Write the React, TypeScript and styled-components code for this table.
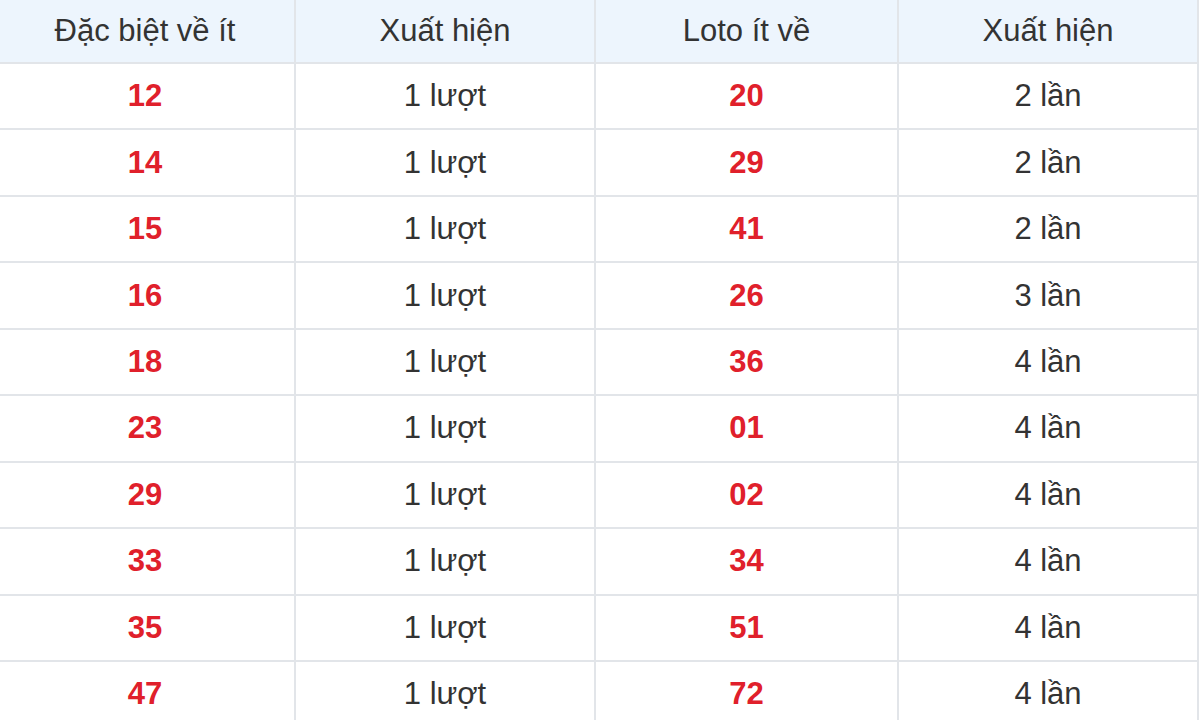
import React from "react";
import styled, { createGlobalStyle } from "styled-components";

const GlobalStyle = createGlobalStyle`
  html, body { margin: 0; padding: 0; background: #ffffff; }
  body { font-family: "Liberation Sans", Arial, sans-serif; overflow: hidden; }
`;

const Wrap = styled.div`
  width: 1203px;
  margin-left: -6px;
`;

const Table = styled.table`
  width: 100%;
  border-collapse: collapse;
  table-layout: fixed;
  font-family: "Liberation Sans", Arial, sans-serif;
  font-size: 31px;
  color: #333333;
`;

const HeadCell = styled.th`
  height: 62px;
  padding: 0;
  background: #edf5fd;
  font-weight: 400;
  text-align: center;
  vertical-align: middle;
  border: 2px solid #e2e5e9;
  border-top: none;
  color: #333333;
`;

const Row = styled.tr`
  height: 66.44px;
`;

const Cell = styled.td<{ $hot?: boolean }>`
  padding: 0;
  text-align: center;
  vertical-align: middle;
  border: 2px solid #e2e5e9;
  color: ${(p) => (p.$hot ? "#e0202b" : "#333333")};
  font-weight: ${(p) => (p.$hot ? 700 : 400)};
`;

const rows: [string, string, string, string][] = [
  ["12", "1 lượt", "20", "2 lần"],
  ["14", "1 lượt", "29", "2 lần"],
  ["15", "1 lượt", "41", "2 lần"],
  ["16", "1 lượt", "26", "3 lần"],
  ["18", "1 lượt", "36", "4 lần"],
  ["23", "1 lượt", "01", "4 lần"],
  ["29", "1 lượt", "02", "4 lần"],
  ["33", "1 lượt", "34", "4 lần"],
  ["35", "1 lượt", "51", "4 lần"],
  ["47", "1 lượt", "72", "4 lần"],
];

export default function App() {
  return (
    <>
      <GlobalStyle />
      <Wrap>
        <Table>
          <colgroup>
            <col style={{ width: 300 }} />
            <col style={{ width: 300 }} />
            <col style={{ width: 303 }} />
            <col style={{ width: 300 }} />
          </colgroup>
          <thead>
            <tr>
              <HeadCell>Đặc biệt về ít</HeadCell>
              <HeadCell>Xuất hiện</HeadCell>
              <HeadCell>Loto ít về</HeadCell>
              <HeadCell>Xuất hiện</HeadCell>
            </tr>
          </thead>
          <tbody>
            {rows.map((r, i) => (
              <Row key={i}>
                <Cell $hot>{r[0]}</Cell>
                <Cell>{r[1]}</Cell>
                <Cell $hot>{r[2]}</Cell>
                <Cell>{r[3]}</Cell>
              </Row>
            ))}
          </tbody>
        </Table>
      </Wrap>
    </>
  );
}
